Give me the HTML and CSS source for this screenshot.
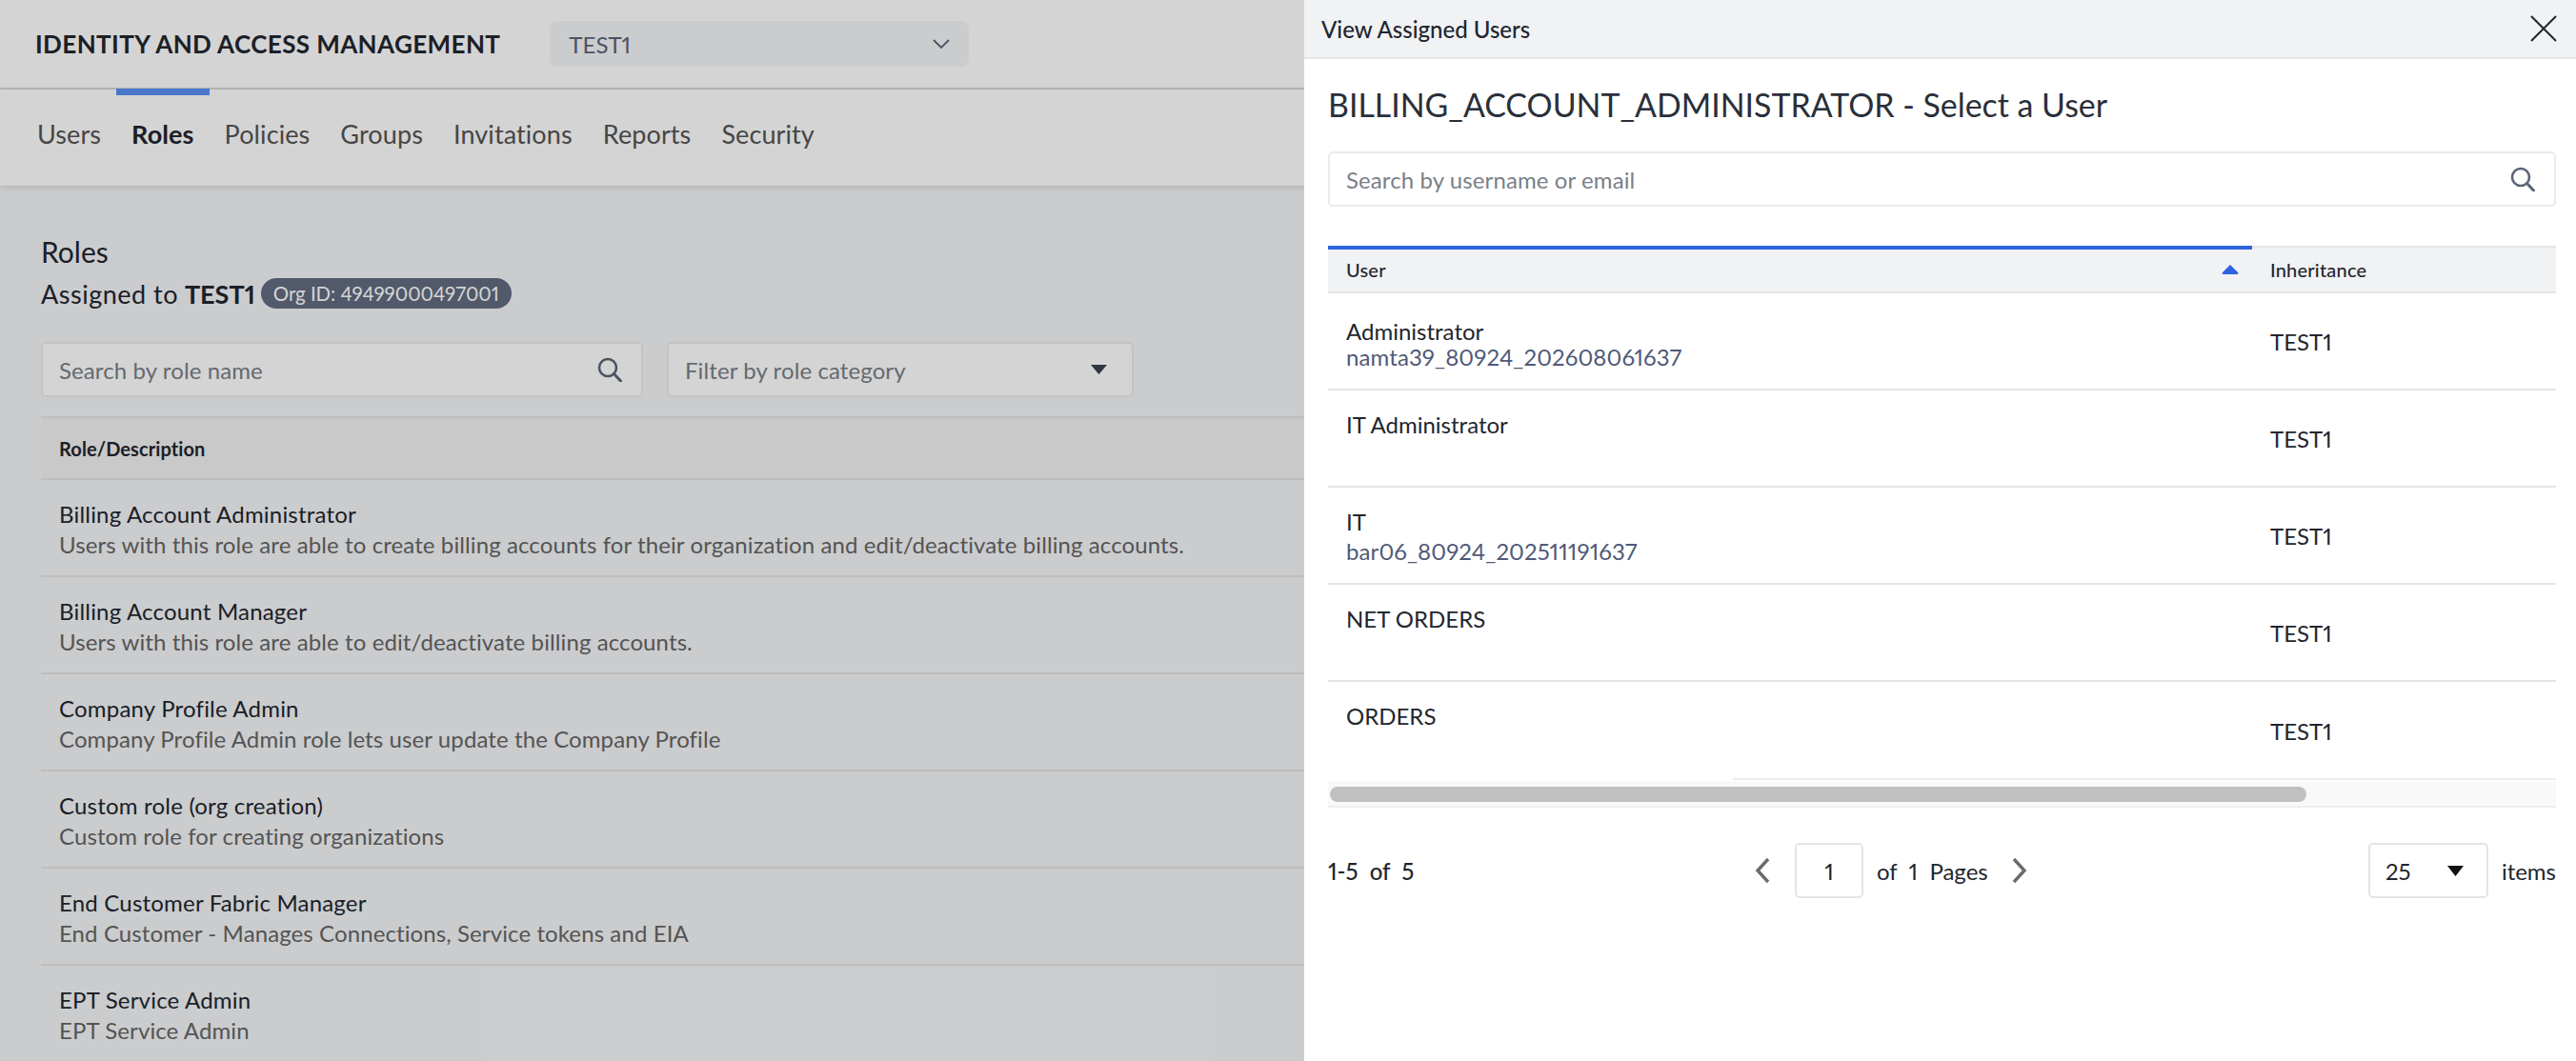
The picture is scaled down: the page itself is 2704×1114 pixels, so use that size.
FILE: index.html
```html
<!DOCTYPE html>
<html lang="en">
<head>
    <meta charset="UTF-8">
    <title>Identity and Access Management</title>
    <link rel="stylesheet" href="styles.css">
</head>
<body>

    <header class="top-bar">
        <div class="app-title">IDENTITY AND ACCESS MANAGEMENT</div>
        <div class="org-select">
            <span>TEST1</span>
            <svg width="18" height="10" viewBox="0 0 18 10"><path d="M1 1l8 8 8-8" fill="none" stroke="#5b6478" stroke-width="1.8"/></svg>
        </div>
    </header>

    <nav class="tabs">
        <a>Users</a>
        <a class="active">Roles</a>
        <a>Policies</a>
        <a>Groups</a>
        <a>Invitations</a>
        <a>Reports</a>
        <a>Security</a>
    </nav>

    <main class="content">
        <h2 class="page-title">Roles</h2>
        <div class="assigned">
            <span><span class="assigned-label">Assigned to</span> <b>TEST1</b></span>
            <span class="pill">Org ID: 49499000497001</span>
        </div>

        <div class="filters">
            <div class="field role-search">
                <span class="placeholder">Search by role name</span>
                <svg width="26" height="26" viewBox="0 0 26 26"><circle cx="11" cy="11" r="9" fill="none" stroke="#5b6478" stroke-width="2.6"/><path d="M17.5 17.5l7 7.5" stroke="#5b6478" stroke-width="3" stroke-linecap="round"/></svg>
            </div>
            <div class="field role-filter">
                <span class="placeholder">Filter by role category</span>
                <svg width="17" height="10" viewBox="0 0 17 10"><path d="M0 0h17L8.5 10z" fill="#3a4150"/></svg>
            </div>
        </div>

        <div class="role-head">Role/Description</div>
        <div class="role-row">
            <div class="role-name">Billing Account Administrator</div>
            <div class="role-desc">Users with this role are able to create billing accounts for their organization and edit/deactivate billing accounts.</div>
        </div>
        <div class="role-row">
            <div class="role-name">Billing Account Manager</div>
            <div class="role-desc">Users with this role are able to edit/deactivate billing accounts.</div>
        </div>
        <div class="role-row">
            <div class="role-name">Company Profile Admin</div>
            <div class="role-desc">Company Profile Admin role lets user update the Company Profile</div>
        </div>
        <div class="role-row">
            <div class="role-name">Custom role (org creation)</div>
            <div class="role-desc">Custom role for creating organizations</div>
        </div>
        <div class="role-row">
            <div class="role-name">End Customer Fabric Manager</div>
            <div class="role-desc">End Customer - Manages Connections, Service tokens and EIA</div>
        </div>
        <div class="role-row">
            <div class="role-name">EPT Service Admin</div>
            <div class="role-desc">EPT Service Admin</div>
        </div>
    </main>

    <div class="backdrop"></div>

    <!-- Painel lateral -->
    <aside class="drawer">
        <div class="drawer-head">
            <span>View Assigned Users</span>
            <svg width="28" height="28" viewBox="0 0 28 28"><path d="M1 1l26 26M27 1L1 27" stroke="#22262e" stroke-width="2"/></svg>
        </div>
        <div class="drawer-body">
            <h2 class="drawer-title">BILLING_ACCOUNT_ADMINISTRATOR - Select a User</h2>
            <div class="field user-search">
                <span class="placeholder">Search by username or email</span>
                <svg width="26" height="26" viewBox="0 0 26 26"><circle cx="11" cy="11" r="9" fill="none" stroke="#5b6478" stroke-width="2.6"/><path d="M17.5 17.5l7 7.5" stroke="#5b6478" stroke-width="3" stroke-linecap="round"/></svg>
            </div>

            <div class="user-table">
                <div class="user-head">
                    <div class="col-user sorted">
                        <span>User</span>
                        <svg width="18" height="10" viewBox="0 0 18 10"><path d="M9 0l8 8q1 2-1 2H2Q0 10 1 8z" fill="#2d64de"/></svg>
                    </div>
                    <div class="col-inherit">Inheritance</div>
                </div>
                <div class="user-row first">
                    <div class="col-user"><div class="user-name">Administrator</div><div class="user-login">namta39_80924_202608061637</div></div>
                    <div class="col-inherit">TEST1</div>
                </div>
                <div class="user-row">
                    <div class="col-user"><div class="user-name">IT Administrator</div></div>
                    <div class="col-inherit">TEST1</div>
                </div>
                <div class="user-row">
                    <div class="col-user"><div class="user-name">IT</div><div class="user-login">bar06_80924_202511191637</div></div>
                    <div class="col-inherit">TEST1</div>
                </div>
                <div class="user-row">
                    <div class="col-user"><div class="user-name">NET ORDERS</div></div>
                    <div class="col-inherit">TEST1</div>
                </div>
                <div class="user-row last">
                    <div class="col-user"><div class="user-name">ORDERS</div></div>
                    <div class="col-inherit">TEST1</div>
                </div>
                <div class="scroll-track"><div class="scroll-thumb"></div></div>
            </div>

            <div class="pager">
                <div class="pager-count">1-5 &nbsp;of&nbsp; 5</div>
                <div class="pager-pages">
                    <svg class="prev" width="18" height="28" viewBox="0 0 18 28"><path d="M15 2L4 14l11 12" fill="none" stroke="#6b6b6b" stroke-width="3.4"/></svg>
                    <div class="page-box">1</div>
                    <span>of&nbsp; 1 &nbsp;Pages</span>
                    <svg class="next" width="18" height="28" viewBox="0 0 18 28"><path d="M3 2l11 12L3 26" fill="none" stroke="#6b6b6b" stroke-width="3.4"/></svg>
                </div>
                <div class="pager-size">
                    <div class="size-box">
                        <span>25</span>
                        <svg width="17" height="11" viewBox="0 0 17 11"><path d="M0 0h17L8.5 11z" fill="#111"/></svg>
                    </div>
                    <span>items</span>
                </div>
            </div>
        </div>
    </aside>

</body>
</html>
```

FILE: styles.css
```css
* {
    box-sizing: border-box;
}
html, body {
    height: 100%;
}
body {
    margin: 0;
    overflow: hidden;
    position: relative;
    font-family: Lato, "Noto Sans", sans-serif;
    font-size: 24px;
    font-variant-numeric: proportional-nums;
    color: #22262e;
    background-color: #f4f6f8;
}
svg {
    display: block;
    flex: none;
}

/* Cabecalho */
.top-bar {
    height: 94px;
    padding: 22px 0 0 37px;
    display: flex;
    align-items: flex-start;
    gap: 52px;
    background-color: #fff;
    border-bottom: 2px solid #dcdcdc;
}
.app-title {
    height: 48px;
    line-height: 48px;
    font-size: 26px;
    font-weight: 700;
    letter-spacing: 0.4px;
    white-space: nowrap;
}
.org-select {
    width: 440px;
    height: 48px;
    padding: 0 20px;
    display: flex;
    align-items: center;
    justify-content: space-between;
    background-color: #f4f6f8;
    border-radius: 8px;
    color: #5b6478;
}
.tabs {
    height: 101px;
    padding-left: 23px;
    display: flex;
    background-color: #fff;
    box-shadow: 0 2px 6px rgba(0,0,0,0.12);
}
.tabs a {
    height: 100%;
    padding: 0 16px;
    margin-top: -1px;
    display: flex;
    align-items: center;
    font-size: 27px;
    letter-spacing: 0.1px;
    color: #555;
    border-top: 7px solid transparent;
    border-bottom: 13px solid transparent;
}
.tabs a.active {
    font-weight: 700;
    color: #22262e;
    border-top-color: #5a91f6;
}

/* Conteudo */
.content {
    padding: 51px 0 0 43px;
}
.page-title {
    margin: 0;
    font-size: 30px;
    line-height: 36px;
    font-weight: 400;
}
.assigned {
    margin-top: 9px;
    height: 34px;
    display: flex;
    align-items: center;
    gap: 6px;
    font-size: 27px;
}
.assigned-label {
    letter-spacing: 0.5px;
}
.pill {
    height: 32px;
    padding: 0 13px;
    display: flex;
    align-items: center;
    font-size: 20.4px;
    color: #fff;
    background-color: #626c80;
    border-radius: 16px;
}
.filters {
    margin-top: 34px;
    display: flex;
    gap: 25px;
}
.field {
    height: 58px;
    padding: 0 18px 0 17px;
    display: flex;
    align-items: center;
    justify-content: space-between;
    border: 2px solid #ebebeb;
    border-radius: 5px;
    background-color: #fff;
}
.placeholder {
    color: #7a7f87;
    letter-spacing: 0.1px;
}
.role-search {
    width: 632px;
    padding-right: 20px;
}
.role-filter {
    width: 490px;
    padding-right: 26px;
}
.role-head {
    margin-top: 20px;
    height: 67px;
    padding-left: 19px;
    display: flex;
    align-items: center;
    font-size: 20px;
    font-weight: 700;
    letter-spacing: 0.1px;
    background-color: #f2f2f2;
    border-top: 2px solid #e4e4e4;
    border-bottom: 2px solid #e4e4e4;
}
.role-row {
    height: 102px;
    padding: 20px 0 0 19px;
    border-bottom: 2px solid #e4e4e4;
}
.role-name {
    height: 32px;
    line-height: 32px;
    letter-spacing: 0.2px;
}
.role-desc {
    height: 32px;
    line-height: 32px;
    letter-spacing: 0.1px;
    color: #666;
}

/* Painel lateral */
.backdrop {
    position: absolute;
    top: 0;
    left: 0;
    right: 0;
    bottom: 0;
    background-color: rgba(0,0,0,0.17);
}
.drawer {
    position: absolute;
    top: 0;
    right: 0;
    bottom: 0;
    width: 1335px;
    background-color: #fff;
}
.drawer-head {
    height: 62px;
    padding: 0 20px 0 18px;
    display: flex;
    align-items: center;
    justify-content: space-between;
    font-size: 24px;
    font-weight: 500;
    background-color: #f1f2f4;
    border-bottom: 2px solid #e4e5e8;
}
.drawer-body {
    padding: 0 21px 0 25px;
}
.drawer-title {
    margin: 26px 0 0;
    height: 44px;
    line-height: 44px;
    font-size: 33.9px;
    font-weight: 400;
    color: #2a2f3a;
    white-space: nowrap;
}
.user-search {
    margin-top: 27px;
    padding-right: 20px;
}
.user-table {
    margin-top: 41px;
}
.user-head {
    height: 50px;
    display: flex;
    font-size: 20px;
    font-weight: 500;
    letter-spacing: 0.2px;
    background-color: #f1f2f4;
    border-top: 2px solid #e4e5e8;
    border-bottom: 2px solid #e4e5e8;
}
.col-user {
    width: 970px;
    padding: 0 14px 0 19px;
}
.col-inherit {
    flex: 1;
    padding-left: 19px;
    display: flex;
    align-items: center;
}
.col-user.sorted {
    margin-top: -2px;
    padding-bottom: 2px;
    display: flex;
    align-items: center;
    justify-content: space-between;
    border-top: 4px solid #2d64de;
}
.user-row {
    height: 102px;
    display: flex;
    border-bottom: 2px solid #e4e5e8;
}
.user-row .col-user {
    padding-top: 20px;
}
.user-row.first .col-user {
    padding-top: 24px;
}
.user-row.first .user-login {
    margin-top: -4px;
}
.user-row.last {
    height: 103px;
    border-bottom: none;
    background: linear-gradient(#ececec, #ececec) no-repeat right bottom / calc(100% - 425px) 2px;
}
.user-name {
    height: 32px;
    line-height: 32px;
}
.user-login {
    height: 30px;
    line-height: 30px;
    letter-spacing: 0.1px;
    color: #4f5a78;
}
.scroll-track {
    margin-top: 1px;
    height: 28px;
    padding: 6px 2px 0;
    background-color: #f9f9f9;
    border-bottom: 2px solid #eee;
}
.scroll-thumb {
    width: 1025px;
    height: 16px;
    background-color: #c0c0c0;
    border-radius: 8px;
}
.pager {
    margin-top: 37px;
    display: flex;
    align-items: center;
}
.pager-count {
    width: 447px;
    font-weight: 500;
}
.pager-pages {
    display: flex;
    align-items: center;
    gap: 14px;
}
.pager-pages .prev {
    margin-right: 11px;
}
.pager-pages .next {
    margin-left: 10px;
}
.page-box {
    width: 72px;
    height: 58px;
    display: flex;
    align-items: center;
    justify-content: center;
    border: 2px solid #e4e4e4;
    border-radius: 5px;
}
.pager-size {
    margin-left: auto;
    display: flex;
    align-items: center;
    gap: 14px;
}
.size-box {
    width: 126px;
    height: 58px;
    padding: 0 24px 0 16px;
    display: flex;
    align-items: center;
    justify-content: space-between;
    border: 2px solid #e4e4e4;
    border-radius: 5px;
}
```
